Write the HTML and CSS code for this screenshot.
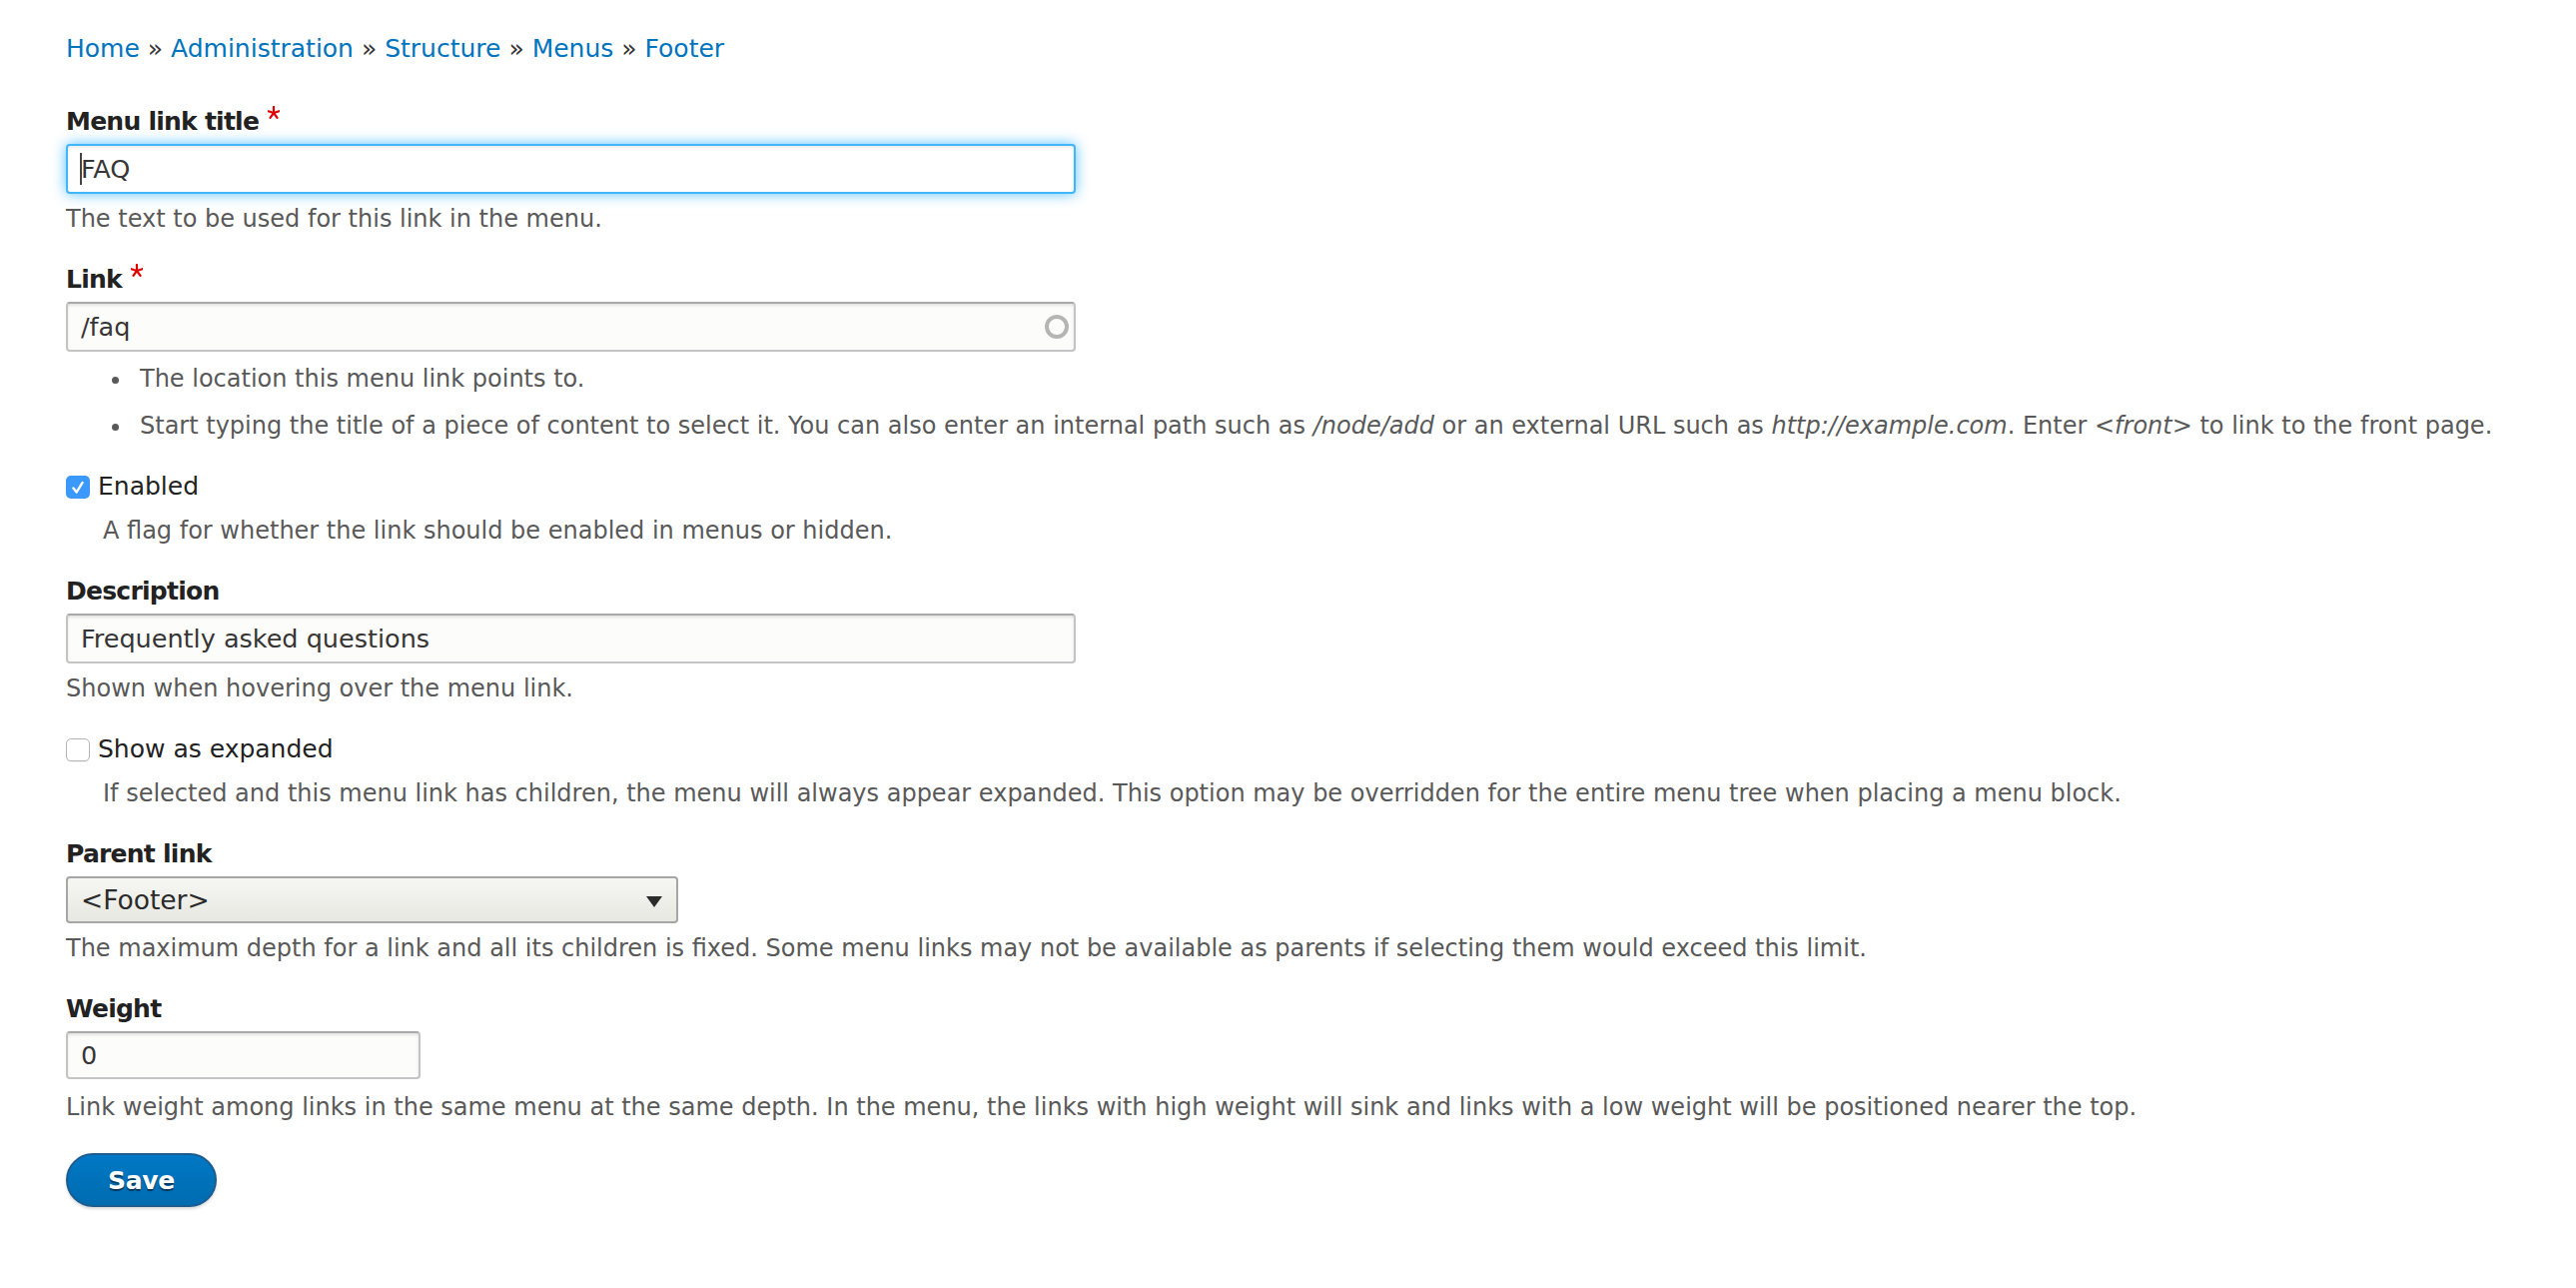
FILE: index.html
```html
<!DOCTYPE html>
<html lang="en">
<head>
<meta charset="utf-8">
<title>Edit menu link</title>
<link rel="stylesheet" href="styles.css">
</head>
<body>
<div class="page">
  <nav class="breadcrumb">
    <a href="#">Home</a> » <a href="#">Administration</a> » <a href="#">Structure</a> » <a href="#">Menus</a> » <a href="#">Footer</a>
  </nav>

  <form class="form" action="#">
    <div class="form-item">
      <label class="label" for="title">Menu link title<svg class="req" viewBox="0 0 12 13" aria-hidden="true"><g stroke="#e00000" stroke-width="2.2" stroke-linecap="round"><line x1="6" y1="7" x2="6" y2="1"/><line x1="6" y1="7" x2="11.5" y2="5.2"/><line x1="6" y1="7" x2="9.5" y2="11.8"/><line x1="6" y1="7" x2="2.5" y2="11.8"/><line x1="6" y1="7" x2="0.5" y2="5.2"/></g></svg></label>
      <div class="input-wrap">
        <input id="title" class="text-input w-long is-focus" type="text" value="FAQ">
        <span class="caret"></span>
      </div>
      <div class="description">The text to be used for this link in the menu.</div>
    </div>

    <div class="form-item">
      <label class="label" for="link">Link<svg class="req" viewBox="0 0 12 13" aria-hidden="true"><g stroke="#e00000" stroke-width="2.2" stroke-linecap="round"><line x1="6" y1="7" x2="6" y2="1"/><line x1="6" y1="7" x2="11.5" y2="5.2"/><line x1="6" y1="7" x2="9.5" y2="11.8"/><line x1="6" y1="7" x2="2.5" y2="11.8"/><line x1="6" y1="7" x2="0.5" y2="5.2"/></g></svg></label>
      <div class="input-wrap">
        <input id="link" class="text-input w-long" type="text" value="/faq">
        <svg class="throbber" viewBox="0 0 28 28" aria-hidden="true"><circle cx="14" cy="14" r="10" fill="none" stroke="#b5b5b5" stroke-width="4"/></svg>
      </div>
      <div class="description">
        <ul class="desc-list">
          <li><span>The location this menu link points to.</span></li>
          <li><span>Start typing the title of a piece of content to select it. You can also enter an internal path such as <em>/node/add</em> or an external URL such as <em>http://example.com</em>. Enter <em>&lt;front&gt;</em> to link to the front page.</span></li>
        </ul>
      </div>
    </div>

    <div class="form-item">
      <div class="check-row">
        <span class="checkbox checked"><svg viewBox="0 0 24 24" aria-hidden="true"><path d="M7 12.5 L10.5 17 L17 6.5" fill="none" stroke="#fff" stroke-width="2.6" stroke-linecap="round" stroke-linejoin="round"/></svg></span>
        <span class="check-label">Enabled</span>
      </div>
      <div class="description check-desc">A flag for whether the link should be enabled in menus or hidden.</div>
    </div>

    <div class="form-item">
      <label class="label" for="desc">Description</label>
      <input id="desc" class="text-input w-long" type="text" value="Frequently asked questions">
      <div class="description">Shown when hovering over the menu link.</div>
    </div>

    <div class="form-item">
      <div class="check-row">
        <span class="checkbox unchecked"></span>
        <span class="check-label">Show as expanded</span>
      </div>
      <div class="description check-desc">If selected and this menu link has children, the menu will always appear expanded. This option may be overridden for the entire menu tree when placing a menu block.</div>
    </div>

    <div class="form-item">
      <label class="label" for="parent">Parent link</label>
      <div class="select-wrap">
        <select id="parent" class="select">
          <option>&lt;Footer&gt;</option>
        </select>
        <svg class="select-arrow" viewBox="0 0 16 11" aria-hidden="true"><polygon points="0,0 16,0 8,11" fill="#2b2b2b"/></svg>
      </div>
      <div class="description">The maximum depth for a link and all its children is fixed. Some menu links may not be available as parents if selecting them would exceed this limit.</div>
    </div>

    <div class="form-item">
      <label class="label" for="weight">Weight</label>
      <input id="weight" class="text-input w-weight" type="text" value="0">
      <div class="description desc-weight">Link weight among links in the same menu at the same depth. In the menu, the links with high weight will sink and links with a low weight will be positioned nearer the top.</div>
    </div>

    <div class="form-actions">
      <button type="button" class="button-primary">Save</button>
    </div>
  </form>
</div>
</body>
</html>
```

FILE: styles.css
```css
* {
  box-sizing: border-box;
}

html,
body {
  margin: 0;
  background: #ffffff;
}

body {
  font-family: "DejaVu Sans", "Liberation Sans", sans-serif;
  font-size: 25px;
  line-height: 40px;
  color: #222222;
}

.page {
  padding: 29px 66px 60px;
}

.breadcrumb {
  color: #333333;
  line-height: 40px;
}

.breadcrumb a {
  color: #0074bd;
  text-decoration: none;
}

.form {
  margin-top: 33px;
  display: flex;
  flex-direction: column;
  align-items: flex-start;
  gap: 27px;
}

.form-item {
  display: flex;
  flex-direction: column;
  align-items: flex-start;
}

.label {
  display: flex;
  align-items: flex-start;
  font-weight: bold;
  letter-spacing: -0.75px;
  line-height: 40px;
  margin-bottom: 2px;
  color: #222222;
}

.req {
  width: 12px;
  height: 13px;
  margin: 4px 0 0 9px;
}

.input-wrap {
  position: relative;
}

.text-input {
  display: block;
  height: 50px;
  padding: 0 13px;
  border: 2px solid #c4c4c4;
  border-top-color: #a9a9a9;
  border-radius: 4px;
  background: #fcfcfa;
  box-shadow: inset 0 2px 3px rgba(0, 0, 0, 0.1);
  font-family: inherit;
  font-size: 25.5px;
  color: #363636;
  outline: none;
}

.text-input.is-focus {
  border-color: #40b6ff;
  background: #ffffff;
  box-shadow: inset 0 2px 3px rgba(0, 0, 0, 0.08), 0 0 14px rgba(64, 182, 255, 0.85);
}

.w-long {
  width: 1011px;
}

.w-weight {
  width: 355px;
  height: 48px;
}

.caret {
  position: absolute;
  left: 14px;
  top: 9px;
  width: 2px;
  height: 32px;
  background: #444444;
}

.throbber {
  position: absolute;
  right: 5px;
  top: 11px;
  width: 28px;
  height: 28px;
  filter: blur(0.4px);
}

.description {
  margin-top: 11px;
  font-size: 24px;
  line-height: 28px;
  color: #595959;
}

.desc-weight {
  margin-top: 14px;
}

.desc-list {
  list-style: none;
  margin: 2px 0 0;
  padding: 0 0 0 46px;
}

.desc-list li {
  display: flex;
  align-items: flex-start;
}

.desc-list li + li {
  margin-top: 19px;
}

.desc-list li::before {
  content: "";
  flex: none;
  width: 7px;
  height: 7px;
  margin: 12px 21px 0 0;
  border-radius: 50%;
  background: #595959;
}

.desc-list em {
  font-style: italic;
}

.check-row {
  display: flex;
  align-items: center;
  gap: 8px;
  height: 40px;
}

.checkbox {
  flex: none;
  width: 24px;
  height: 23px;
  border-radius: 5px;
  margin-top: 1px;
}

.checkbox.checked {
  display: flex;
  align-items: center;
  justify-content: center;
  background: #3b99fc;
}

.checkbox.checked svg {
  width: 22px;
  height: 22px;
}

.checkbox.unchecked {
  background: #ffffff;
  border: 1px solid #b4b4b4;
  box-shadow: 0 1px 1px rgba(0, 0, 0, 0.06);
}

.check-label {
  color: #222222;
}

.check-desc {
  margin-top: 10px;
  padding-left: 37px;
}

.select-wrap {
  position: relative;
}

.select {
  display: block;
  width: 613px;
  height: 47px;
  padding: 0 40px 0 13px;
  border: 2px solid #a6a6a6;
  border-radius: 4px;
  background: linear-gradient(#f6f6f3, #e8e8e2);
  font-family: inherit;
  font-size: 26.5px;
  color: #2b2b2b;
  -webkit-appearance: none;
  appearance: none;
}

.select-arrow {
  position: absolute;
  right: 16px;
  top: 20px;
  width: 16px;
  height: 11px;
}

.form-actions {
  margin-top: 5px;
}

.button-primary {
  display: block;
  width: 151px;
  height: 54px;
  padding: 0;
  border: 2px solid #1e5c90;
  border-radius: 27px;
  background: linear-gradient(#0078c5, #006cb0);
  box-shadow: 0 2px 3px rgba(0, 0, 0, 0.15);
  font-family: inherit;
  font-size: 25px;
  font-weight: bold;
  letter-spacing: -0.3px;
  color: #ffffff;
  text-shadow: 0 2px 1px rgba(0, 0, 0, 0.5);
}
```
